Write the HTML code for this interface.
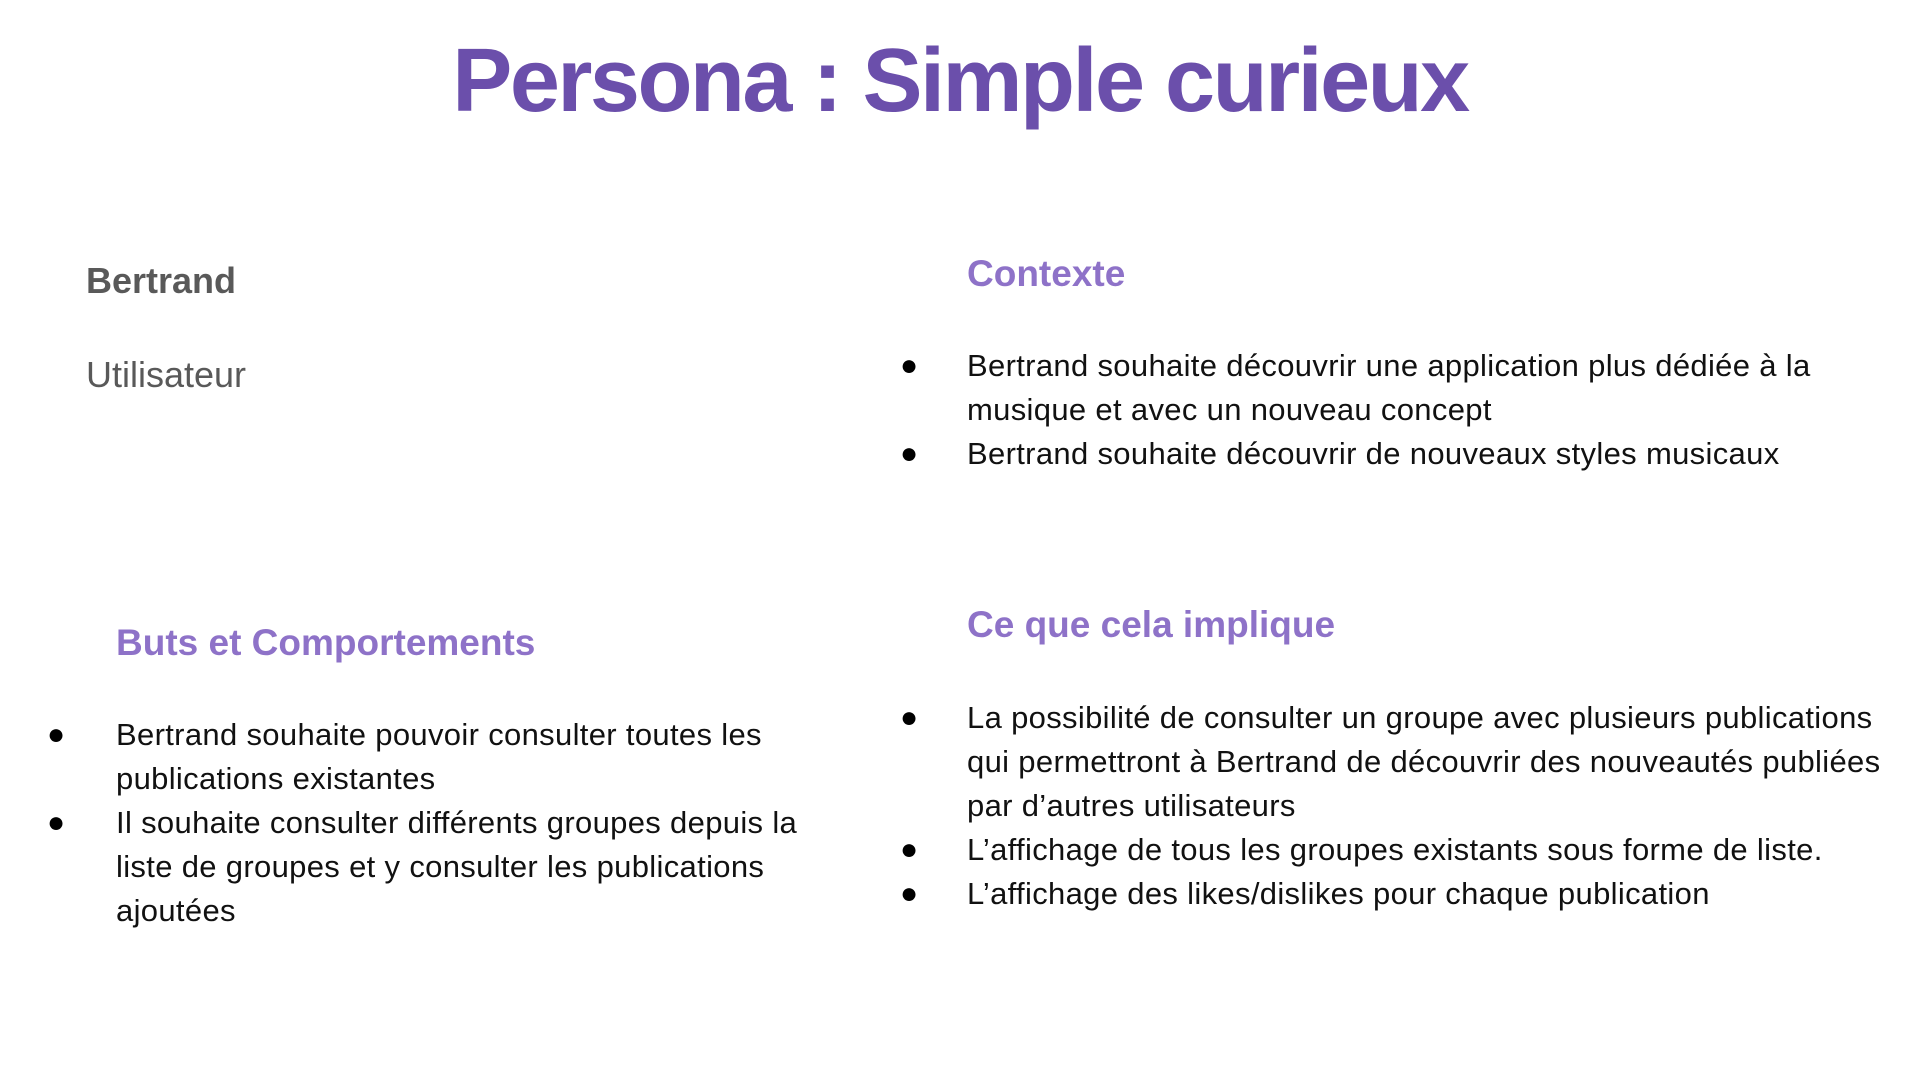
<!DOCTYPE html>
<html><head><meta charset="utf-8"><style>
html,body{margin:0;padding:0;background:#fff;}
body{width:1920px;height:1080px;position:relative;overflow:hidden;font-family:"Liberation Sans",sans-serif;}
.a{position:absolute;white-space:nowrap;}
h1{position:absolute;left:0;width:1920px;text-align:center;top:30px;margin:0;font-size:90px;font-weight:bold;color:#6b4fab;letter-spacing:-2.5px;}
.h{font-weight:bold;color:#8e72c8;font-size:37px;}
.t{font-size:31px;color:#111;line-height:44px;letter-spacing:0.33px;}
.b{position:absolute;font-size:30px;color:#000;}
</style></head><body>
<h1>Persona : Simple curieux</h1>
<div class="a" style="left:86px;top:260px;font-size:36px;font-weight:bold;color:#595959;">Bertrand</div>
<div class="a" style="left:86px;top:354px;font-size:36px;color:#595959;">Utilisateur</div>

<div class="a h" style="left:967px;top:253px;">Contexte</div>
<div class="a t" style="left:967px;top:344px;">Bertrand souhaite découvrir une application plus dédiée à la<br>musique et avec un nouveau concept<br>Bertrand souhaite découvrir de nouveaux styles musicaux</div>
<div class="b" style="left:900px;top:349px;">●</div>
<div class="b" style="left:900px;top:437px;">●</div>

<div class="a h" style="left:116px;top:622px;">Buts et Comportements</div>
<div class="a t" style="left:116px;top:713px;">Bertrand souhaite pouvoir consulter toutes les<br>publications existantes<br>Il souhaite consulter différents groupes depuis la<br>liste de groupes et y consulter les publications<br>ajoutées</div>
<div class="b" style="left:47px;top:718px;">●</div>
<div class="b" style="left:47px;top:806px;">●</div>

<div class="a h" style="left:967px;top:604px;">Ce que cela implique</div>
<div class="a t" style="left:967px;top:696px;">La possibilité de consulter un groupe avec plusieurs publications<br>qui permettront à Bertrand de découvrir des nouveautés publiées<br>par d’autres utilisateurs<br>L’affichage de tous les groupes existants sous forme de liste.<br>L’affichage des likes/dislikes pour chaque publication</div>
<div class="b" style="left:900px;top:701px;">●</div>
<div class="b" style="left:900px;top:833px;">●</div>
<div class="b" style="left:900px;top:877px;">●</div>
</body></html>
